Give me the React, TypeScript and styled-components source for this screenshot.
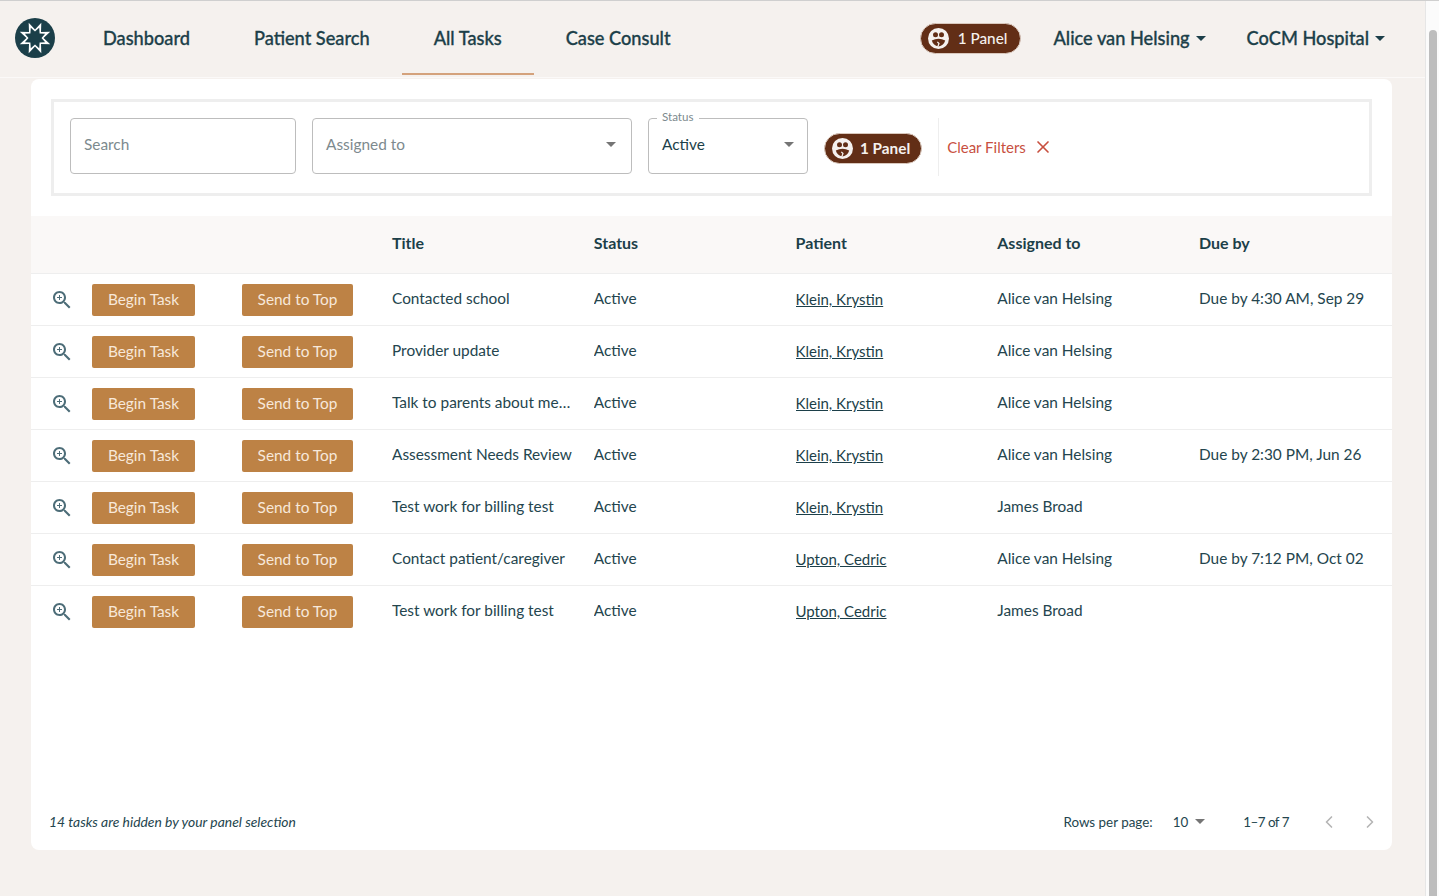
import React from "react";
import styled, { createGlobalStyle } from "styled-components";
import { X, ChevronLeft, ChevronRight } from "lucide-react";

const Global = createGlobalStyle`
  html, body { margin: 0; padding: 0; height: 100%; overflow: hidden; background: #f5f1ee; }
  body { font-family: Lato, "Open Sans", sans-serif; color: #1c3f49; }
  * { box-sizing: border-box; }
`;
const Page = styled.div`display: flex; width: 1439px; height: 896px; border-top: 1px solid #cfcfcf;`;
const Main = styled.div`flex: 1; min-width: 0; display: flex; flex-direction: column;`;
const Scrollbar = styled.div`width: 14px; background: #fbfbfb; border-left: 1px solid #e6e6e6; padding: 29px 2px 0 3px; flex: none;`;
const Thumb = styled.div`height: 100%; background: #bdbdbd; border-radius: 5px 5px 0 0;`;
const Header = styled.header`height: 77px; flex: none; display: flex; align-items: center; padding: 0 40px 2px 15px; border-bottom: 1px solid #fbf9f8;`;
const Nav = styled.nav`display: flex; height: 100%; margin-left: 16px; flex: 1;`;
const NavItem = styled.a<{ $active?: boolean }>`
  display: flex; align-items: center; padding: 2px 32px 0; font-size: 18.2px; font-weight: 500; color: #1c3f49; -webkit-text-stroke: 0.3px #1c3f49;
  border-bottom: 2px solid ${(p) => (p.$active ? "#d4a27c" : "transparent")};
`;
const Pill = styled.div<{ $bold?: boolean }>`
  display: inline-flex; align-items: center; gap: ${(p) => (p.$bold ? 7 : 9)}px; height: 31px; padding: 0 ${(p) => (p.$bold ? 11 : 13)}px 0 7px; border-radius: 16px;
  background: #622e16; color: #f5f1ee; border: 1px solid #d9c8bd; font-size: 15.3px; font-weight: ${(p) => (p.$bold ? 700 : 500)}; flex: none;
`;
const Menu = styled.div<{ $left: number }>`
  display: flex; align-items: center; gap: 6px; margin-left: ${(p) => p.$left}px; font-size: 18.2px; font-weight: 500; color: #1c3f49; -webkit-text-stroke: 0.3px #1c3f49;
`;
const Caret = styled.span<{ $color?: string }>`
  width: 0; height: 0; border-left: 5px solid transparent; border-right: 5px solid transparent; border-top: 5px solid ${(p) => p.$color || "#1c3f49"}; display: inline-block; flex: none;
`;
const Content = styled.main`padding: 1px 33px 0 31px; display: flex; flex-direction: column;`;
const FilterCard = styled.section`background: #fff; border-radius: 8px 8px 0 0; padding: 20px 20px 20px; height: 137px;`;
const FilterBox = styled.div`border: 3px solid #eeeeee; height: 97px; padding: 16px 16px 0; display: flex; align-items: flex-start; gap: 16px;`;
const Field = styled.div<{ $w: number; $pr?: number }>`
  position: relative; width: ${(p) => p.$w}px; height: 56px; border: 1px solid #bdbdbd; border-radius: 4px; flex: none;
  display: flex; align-items: center; justify-content: space-between; padding: 0 ${(p) => p.$pr || 13}px 4px 13px; font-size: 15.4px;
`;
const Placeholder = styled.span`color: #7d8a8e;`;
const Legend = styled.span`position: absolute; top: -9px; left: 8px; background: #fff; padding: 0 5px; font-size: 11.6px; line-height: 14px; color: #7d8a8e;`;
const PillSlot = styled.div`height: 56px; display: flex; align-items: center; margin-top: 2px;`;
const Clear = styled.div`
  height: 58px; display: flex; align-items: center; gap: 7px; border-left: 1px solid #eeeeee; margin-left: 0; padding-left: 8px; color: #c8503f; font-size: 15px;
`;
const TableCard = styled.section`background: #fff; height: 634px; border-radius: 0 0 8px 8px; display: flex; flex-direction: column;`;
const cols = "361px repeat(5, 201.75px)";
const HeadRow = styled.div`display: grid; grid-template-columns: ${cols}; height: 58px; align-items: center; background: #faf8f7; border-bottom: 1px solid #eeeeee; font-size: 16px; font-weight: 700; padding-bottom: 4px;`;
const Row = styled.div<{ $last?: boolean }>`display: grid; grid-template-columns: ${cols}; height: 52px; align-items: center; border-bottom: 1px solid ${(p) => (p.$last ? "transparent" : "#eeeeee")}; font-size: 15.4px; color: #24454e;`;
const Actions = styled.div`display: flex; align-items: center; padding-left: 19px;`;
const IconSlot = styled.span`display: flex; width: 24px; color: #4d6d78; margin-right: 18px;`;
const TaskButton = styled.button<{ $w: number; $gap: number }>`
  width: ${(p) => p.$w}px; margin-right: ${(p) => p.$gap}px; height: 32px; border: none; border-radius: 2px; background: #bd8245; color: #f7e8da;
  font: 400 15.4px Lato, sans-serif; padding: 0 0 2px;
`;
const Cell = styled.div`white-space: nowrap; overflow: hidden; text-overflow: ellipsis; padding-right: 18px; margin-top: -3px;`;
const PatientLink = styled.a`text-decoration: underline; color: #1c3f49; display: inline-block; margin-top: 2px; font-size: 15px;`;
const Spacer = styled.div`flex: 1;`;
const Footer = styled.div`height: 54px; display: flex; align-items: center; padding: 0 12px 3px 18px; font-size: 13.4px; color: #24454e;`;
const Note = styled.em`flex: 1; font-style: italic; font-size: 13.9px;`;
const FooterText = styled.span<{ $left?: number }>`margin-left: ${(p) => p.$left || 0}px; display: flex;`;
const RangeText = styled(FooterText)`letter-spacing: -0.5px;`;
const Pager = styled.span<{ $left: number }>`display: flex; margin-left: ${(p) => p.$left}px; color: #b5b5b5;`;

const ZoomGlyph = () => (
  <svg width="24" height="24" viewBox="0 0 24 24" fill="currentColor">
    <path d="M15.5 14h-.79l-.28-.27C15.41 12.59 16 11.11 16 9.500 16 5.910 13.090 3 9.500 3S3 5.910 3 9.500 5.910 16 9.500 16c1.610 0 3.090-.59 4.230-1.570l.27.280v.79l5 4.990L20.490 19l-4.990-5zm-6 0C7.010 14 5 11.990 5 9.500S7.010 5 9.500 5 14 7.010 14 9.500 11.990 14 9.500 14z" />
    <path d="M12 10h-2v2H9v-2H7V9h2V7h1v2h2v1z" />
  </svg>
);
const PanelIcon = () => (
  <svg width="21" height="21" viewBox="0 0 21 21">
    <circle cx="10.500" cy="10.500" r="10.500" fill="#f5f1ee" />
    <circle cx="7.500" cy="6.800" r="2.500" fill="#622e16" />
    <circle cx="13.500" cy="6.800" r="2.500" fill="#622e16" />
    <path d="M3.800 12.500Q10.500 8.800 17.200 12.500Q15.800 17.500 10.500 18.500Q5.200 17.500 3.800 12.500z" fill="#622e16" />
    <path d="M9.500 19.500L11 15.500 9.300 13.800" fill="none" stroke="#f5f1ee" strokeWidth="1.200" />
  </svg>
);
const star = (offset: number, outer: number, inner: number) =>
  Array.from({ length: 16 }, (_, k) => {
    const r = k % 2 === 0 ? outer : inner;
    const a = ((offset + k * 22.5) * Math.PI) / 180;
    return `${(20 + r * Math.cos(a)).toFixed(2)},${(20 + r * Math.sin(a)).toFixed(2)}`;
  }).join(" ");
const Logo = () => (
  <svg width="40" height="40" viewBox="0 0 40 40" style={{ flex: "none" }}>
    <circle cx="20" cy="20" r="20" fill="#1b3f49" />
    <polygon points={star(22.5, 16.500, 8.500)} fill="#fff" />
    <polygon points={star(22.5, 11, 6.500)} fill="#1b3f49" />
  </svg>
);

const rows = [
  ["Contacted school", "Klein, Krystin", "Alice van Helsing", "Due by 4:30 AM, Sep 29"],
  ["Provider update", "Klein, Krystin", "Alice van Helsing", ""],
  ["Talk to parents about medication", "Klein, Krystin", "Alice van Helsing", ""],
  ["Assessment Needs Review", "Klein, Krystin", "Alice van Helsing", "Due by 2:30 PM, Jun 26"],
  ["Test work for billing test", "Klein, Krystin", "James Broad", ""],
  ["Contact patient/caregiver", "Upton, Cedric", "Alice van Helsing", "Due by 7:12 PM, Oct 02"],
  ["Test work for billing test", "Upton, Cedric", "James Broad", ""],
];

export default function App() {
  return (
    <Page>
      <Global />
      <Main>
        <Header>
          <Logo />
          <Nav>
            <NavItem>Dashboard</NavItem>
            <NavItem>Patient Search</NavItem>
            <NavItem $active>All Tasks</NavItem>
            <NavItem>Case Consult</NavItem>
          </Nav>
          <Pill><PanelIcon />1 Panel</Pill>
          <Menu $left={32}>Alice van Helsing <Caret /></Menu>
          <Menu $left={41}>CoCM Hospital <Caret /></Menu>
        </Header>
        <Content>
          <FilterCard>
            <FilterBox>
              <Field $w={226}><Placeholder>Search</Placeholder></Field>
              <Field $w={320} $pr={15}><Placeholder>Assigned to</Placeholder><Caret $color="#757575" /></Field>
              <Field $w={160}><Legend>Status</Legend>Active<Caret $color="#757575" /></Field>
              <PillSlot><Pill $bold><PanelIcon />1 Panel</Pill></PillSlot>
              <Clear>Clear Filters <X size={20} strokeWidth={2} /></Clear>
            </FilterBox>
          </FilterCard>
          <TableCard>
            <HeadRow>
              <span />
              <span>Title</span><span>Status</span><span>Patient</span><span>Assigned to</span><span>Due by</span>
            </HeadRow>
            {rows.map((r, i) => (
              <Row key={i} $last={i === rows.length - 1}>
                <Actions>
                  <IconSlot><ZoomGlyph /></IconSlot>
                  <TaskButton $w={103} $gap={47}>Begin Task</TaskButton>
                  <TaskButton $w={111} $gap={0}>Send to Top</TaskButton>
                </Actions>
                <Cell>{r[0]}</Cell>
                <Cell>Active</Cell>
                <Cell><PatientLink>{r[1]}</PatientLink></Cell>
                <Cell>{r[2]}</Cell>
                <Cell>{r[3]}</Cell>
              </Row>
            ))}
            <Spacer />
            <Footer>
              <Note>14 tasks are hidden by your panel selection</Note>
              <FooterText>Rows per page:</FooterText>
              <FooterText $left={20}>10</FooterText>
              <FooterText $left={7}><Caret $color="#757575" /></FooterText>
              <RangeText $left={38}>1–7 of 7</RangeText>
              <Pager $left={30}><ChevronLeft size={20} /></Pager>
              <Pager $left={21}><ChevronRight size={20} /></Pager>
            </Footer>
          </TableCard>
        </Content>
      </Main>
      <Scrollbar><Thumb /></Scrollbar>
    </Page>
  );
}
